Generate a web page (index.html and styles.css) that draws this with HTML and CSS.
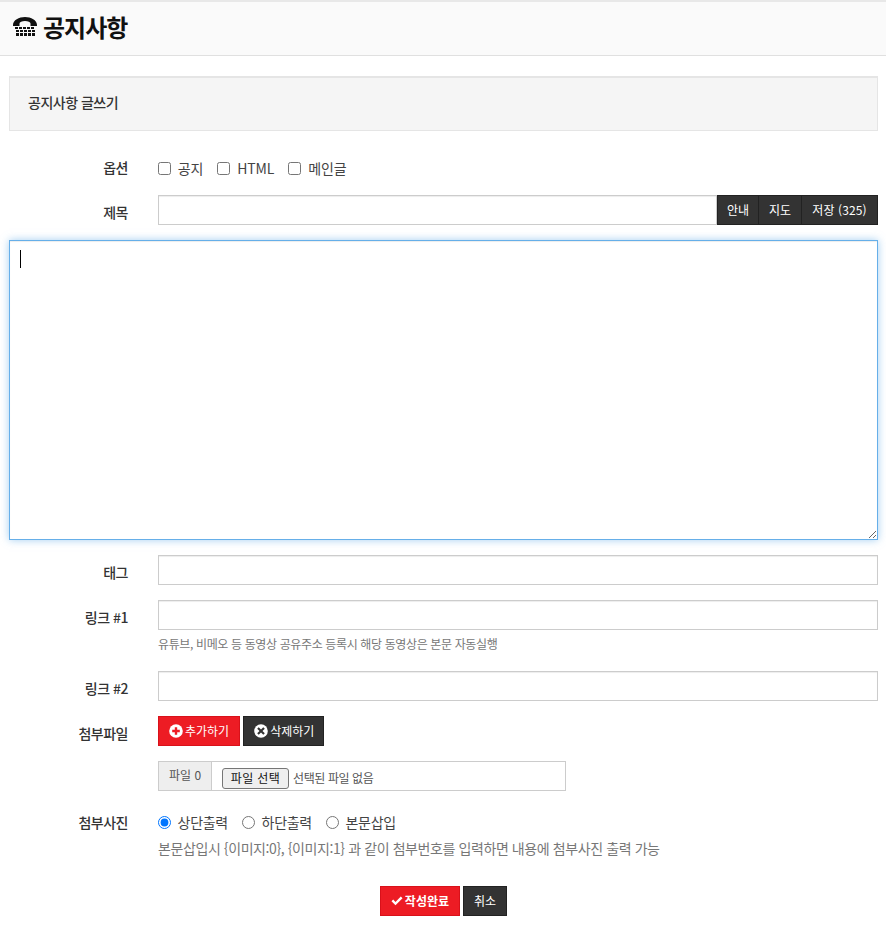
FILE: index.html
```html
<!DOCTYPE html>
<html lang="ko">
<head>
<meta charset="utf-8">
<title>공지사항</title>
<link rel="stylesheet" href="styles.css">
</head>
<body>
<header class="page-head">
  <h1 class="page-title">
    <svg class="tty" viewBox="0 0 24 19" width="24" height="19" aria-hidden="true">
      <path d="M0 8C0 3 6 0 12 0s12 3 12 8v1h-6.500V6.500C17.500 5 15 4 12 4S6.500 5 6.500 6.500V9H0z"/>
      <path d="M2 10h3v2H2zM6 10h3v2H6zM10 10h3v2h-3zM14 10h3v2h-3zM18 10h3v2h-3zM3 13h3v2H3zM7 13h3v2H7zM11 13h3v2h-3zM15 13h3v2h-3zM19 13h3v2h-3zM3 16h3v3H3zM7 16h3v3H7zM11 16h3v3h-3zM15 16h3v3h-3zM19 16h3v3h-3z"/>
    </svg>
    <span>공지사항</span>
  </h1>
</header>

<main class="content">
  <div class="panel-head">공지사항 글쓰기</div>

  <form class="form">
    <div class="row row-check">
      <div class="label">옵션</div>
      <div class="field checks">
        <label class="opt"><input type="checkbox"> 공지</label>
        <label class="opt"><input type="checkbox"> HTML</label>
        <label class="opt"><input type="checkbox"> 메인글</label>
      </div>
    </div>

    <div class="row">
      <div class="label">제목</div>
      <div class="field group">
        <input class="input group-input" type="text">
        <button type="button" class="btn dark seg seg-a">안내</button>
        <button type="button" class="btn dark seg seg-b">지도</button>
        <button type="button" class="btn dark seg seg-c">저장 (325)</button>
      </div>
    </div>

    <div class="row editor">
      <textarea class="textarea" autofocus></textarea>
      <span class="caret"></span>
    </div>

    <div class="row">
      <div class="label">태그</div>
      <div class="field"><input class="input" type="text"></div>
    </div>

    <div class="row">
      <div class="label">링크 #1</div>
      <div class="field">
        <input class="input" type="text">
        <p class="help help-small">유튜브, 비메오 등 동영상 공유주소 등록시 해당 동영상은 본문 자동실행</p>
      </div>
    </div>

    <div class="row">
      <div class="label">링크 #2</div>
      <div class="field"><input class="input" type="text"></div>
    </div>

    <div class="row row-attach">
      <div class="label">첨부파일</div>
      <div class="field">
        <div class="actions">
          <button type="button" class="btn red icon-btn">
            <svg class="ico" viewBox="0 0 14 14" aria-hidden="true"><circle cx="7" cy="7" r="6.800" fill="#fff"/><path d="M3.200 5.800h2.600V3.200h2.400v2.600h2.600v2.400H8.200v2.600H5.800V8.200H3.200z" fill="#ed1c24"/></svg>추가하기
          </button>
          <button type="button" class="btn dark icon-btn icon-btn-del">
            <svg class="ico" viewBox="0 0 14 14" aria-hidden="true"><circle cx="7" cy="7" r="6.800" fill="#fff"/><path d="M4.700 3.200 7 5.500l2.300-2.300 1.500 1.500L8.500 7l2.300 2.300-1.500 1.500L7 8.500l-2.300 2.300-1.500-1.500L5.500 7 3.200 4.700z" fill="#333"/></svg>삭제하기
          </button>
        </div>
        <div class="file-line">
          <span class="file-tag">파일 0</span>
          <span class="file-body">
            <button type="button" class="file-btn">파일 선택</button>
            <span class="file-name">선택된 파일 없음</span>
          </span>
        </div>
      </div>
    </div>

    <div class="row row-radio">
      <div class="label">첨부사진</div>
      <div class="field">
        <div class="checks radios">
          <label class="opt"><input type="radio" name="pos" checked> 상단출력</label>
          <label class="opt"><input type="radio" name="pos"> 하단출력</label>
          <label class="opt"><input type="radio" name="pos"> 본문삽입</label>
        </div>
        <p class="help help-large">본문삽입시 {이미지:0}, {이미지:1} 과 같이 첨부번호를 입력하면 내용에 첨부사진 출력 가능</p>
      </div>
    </div>

    <div class="submit-bar">
      <button type="button" class="btn red strong">
        <svg class="ico-check" viewBox="0 0 12 10" aria-hidden="true"><path d="M0.500 5.300 2.200 3.600 4.500 5.900 9.800 0.600 11.500 2.300 4.500 9.300z" fill="#fff"/></svg>작성완료
      </button>
      <button type="button" class="btn dark">취소</button>
    </div>
  </form>
</main>
</body>
</html>
```
FILE: styles.css
```css
* { box-sizing: border-box; }
html, body { margin: 0; padding: 0; }
body {
  background: #fff;
  color: #333;
  font-family: "Noto Sans CJK KR", "Noto Sans", sans-serif;
  font-size: 13px;
  line-height: 20px;
  overflow: hidden;
}
.page-head {
  height: 56px;
  padding: 0 13px 4px;
  background: #fafafa;
  border-top: 2px solid #e8e8e8;
  border-bottom: 1px solid #e0e0e0;
  display: flex;
  align-items: center;
}
.page-title {
  margin: 0;
  display: flex;
  align-items: center;
  gap: 6px;
  color: #111;
  font-size: 24px;
  line-height: 30px;
  font-weight: 700;
  letter-spacing: -1px;
}
.tty { display: block; fill: #111; }
.content { padding: 20px 8px 0 9px; }
.panel-head {
  height: 55px;
  padding: 0 18px 4px;
  display: flex;
  align-items: center;
  background: #f5f5f5;
  border: 1px solid #e5e5e5;
  border-top-width: 2px;
  color: #333;
  font-size: 14px;
  letter-spacing: -0.5px;
  font-weight: 500;
}
.form { padding-top: 25px; }
.row { display: flex; margin-bottom: 15px; }
.label {
  width: 119px;
  height: 30px;
  flex: none;
  padding-top: 2px;
  text-align: right;
  line-height: 30px;
  font-weight: 500;
  font-size: 14px;
  letter-spacing: -0.5px;
  color: #333;
}
.field { flex: 1; min-width: 0; margin-left: 30px; }
.row-check { height: 25px; margin-bottom: 14px; }
.row-check .label { padding-top: 0; line-height: 23px; height: 25px; }
.checks {
  display: flex;
  align-items: center;
  gap: 14px;
  height: 25px;
  font-size: 14px;
  letter-spacing: -0.1px;
  color: #444;
}
.radios { letter-spacing: -0.3px; }
.opt { display: inline-flex; align-items: center; white-space: pre; line-height: 23px; }
.opt input { margin: 0 3px 0 0; width: 13px; height: 13px; }
.input {
  display: block;
  width: 100%;
  height: 30px;
  padding: 0 10px;
  border: 1px solid #ccc;
  box-shadow: inset 0 1px 1px rgba(0,0,0,.075);
  background: #fff;
  outline: none;
}
.group { display: flex; }
.group-input { flex: 1; min-width: 0; }
.btn {
  height: 30px;
  padding: 0 10px;
  border: 1px solid;
  font: inherit;
  font-size: 12px;
  color: #fff;
  line-height: 1;
  cursor: pointer;
}
.dark { background: #333; border-color: #222; }
.red { background: #ed1c24; border-color: #d9111a; }
.seg { padding: 0; flex: none; }
.seg + .seg { margin-left: -1px; }
.seg-a { width: 42px; }
.seg-b { width: 44px; }
.seg-c { width: 77px; letter-spacing: 0.1px; }
.editor { position: relative; }
.textarea {
  display: block;
  width: 100%;
  height: 300px;
  padding: 8px 10px;
  border: 1px solid #66afe9;
  box-shadow: inset 0 1px 1px rgba(0,0,0,.075), 0 0 8px rgba(102,175,233,.6);
  outline: none;
  caret-color: transparent;
  resize: both;
}
.caret {
  position: absolute;
  left: 11px;
  top: 10px;
  width: 1px;
  height: 18px;
  background: #000;
}
.help { margin: 0; color: #777; }
.help-small { margin: 5px 0 3px; font-size: 12px; line-height: 18px; letter-spacing: -0.37px; }
.help-large { margin-top: 3px; font-size: 14px; line-height: 20px; letter-spacing: -0.41px; }
.actions { display: flex; gap: 3px; }
.icon-btn { display: inline-flex; align-items: center; font-weight: 400; }
.icon-btn-del { padding-right: 9px; }
.ico { width: 14px; height: 14px; margin-right: 2px; flex: none; }
.file-line {
  display: flex;
  width: 408px;
  height: 30px;
  margin-top: 15px;
  border: 1px solid #ccc;
}
.file-tag {
  width: 53px;
  flex: none;
  background: #eee;
  border-right: 1px solid #ccc;
  color: #555;
  font-size: 12px;
  text-align: center;
  line-height: 25px;
}
.file-body { flex: 1; display: flex; align-items: center; gap: 4px; padding: 4px 0 0 10px; }
.file-btn {
  width: 67px;
  height: 21px;
  padding: 0;
  background: #efefef;
  border: 1px solid #767676;
  border-radius: 3px;
  font-family: inherit;
  font-size: 12px;
  letter-spacing: 0.4px;
  line-height: 1;
  color: #111;
}
.file-name { font-size: 12px; color: #555; letter-spacing: -0.4px; }
.row-attach { margin-bottom: 19px; }
.row-radio { margin-bottom: 28px; }
.row-radio .label { padding-top: 0; line-height: 25px; height: 25px; }
.submit-bar { display: flex; justify-content: center; gap: 3px; }
.strong { font-weight: 700; display: inline-flex; align-items: center; padding: 0 10px; }
.ico-check { width: 12px; height: 10px; margin-right: 2px; }
```
